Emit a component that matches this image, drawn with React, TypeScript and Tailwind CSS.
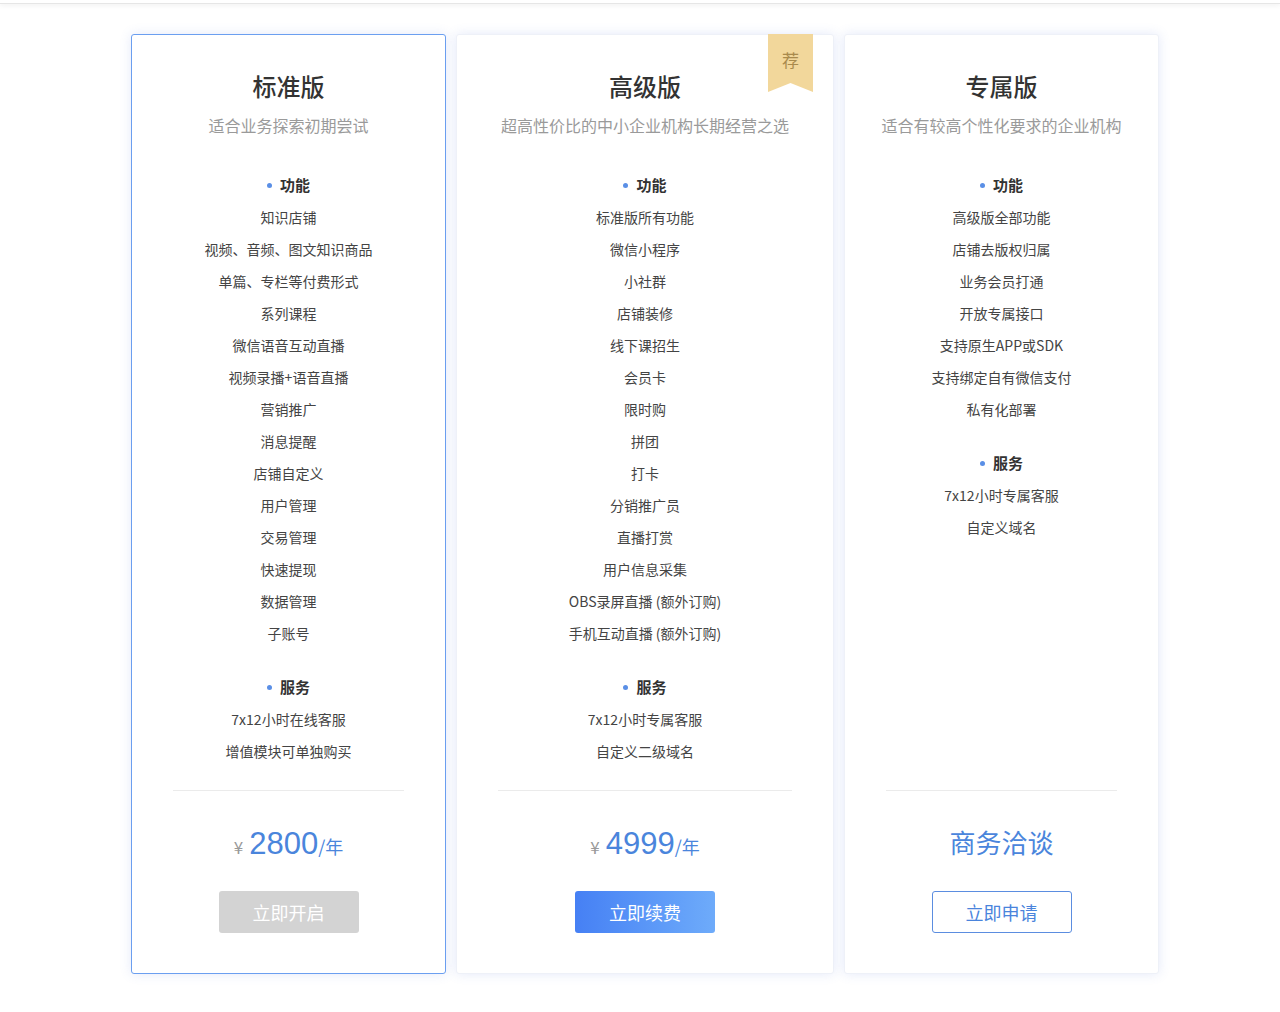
import React from 'react';

interface Group {
  title: string;
  items: string[];
}

interface Plan {
  name: string;
  desc: string;
  groups: Group[];
  recommended?: boolean;
  selected?: boolean;
  wide?: boolean;
  price?: string;
  action: string;
  variant: 'gray' | 'blue' | 'outline';
}

const plans: Plan[] = [
  {
    name: '标准版',
    desc: '适合业务探索初期尝试',
    selected: true,
    groups: [
      {
        title: '功能',
        items: [
          '知识店铺',
          '视频、音频、图文知识商品',
          '单篇、专栏等付费形式',
          '系列课程',
          '微信语音互动直播',
          '视频录播+语音直播',
          '营销推广',
          '消息提醒',
          '店铺自定义',
          '用户管理',
          '交易管理',
          '快速提现',
          '数据管理',
          '子账号',
        ],
      },
      { title: '服务', items: ['7x12小时在线客服', '增值模块可单独购买'] },
    ],
    price: '2800',
    action: '立即开启',
    variant: 'gray',
  },
  {
    name: '高级版',
    desc: '超高性价比的中小企业机构长期经营之选',
    recommended: true,
    wide: true,
    groups: [
      {
        title: '功能',
        items: [
          '标准版所有功能',
          '微信小程序',
          '小社群',
          '店铺装修',
          '线下课招生',
          '会员卡',
          '限时购',
          '拼团',
          '打卡',
          '分销推广员',
          '直播打赏',
          '用户信息采集',
          'OBS录屏直播 (额外订购)',
          '手机互动直播 (额外订购)',
        ],
      },
      { title: '服务', items: ['7x12小时专属客服', '自定义二级域名'] },
    ],
    price: '4999',
    action: '立即续费',
    variant: 'blue',
  },
  {
    name: '专属版',
    desc: '适合有较高个性化要求的企业机构',
    groups: [
      {
        title: '功能',
        items: [
          '高级版全部功能',
          '店铺去版权归属',
          '业务会员打通',
          '开放专属接口',
          '支持原生APP或SDK',
          '支持绑定自有微信支付',
          '私有化部署',
        ],
      },
      { title: '服务', items: ['7x12小时专属客服', '自定义域名'] },
    ],
    action: '立即申请',
    variant: 'outline',
  },
];

const PlanCard: React.FC<{ plan: Plan }> = ({ plan }) => {
  const btn =
    plan.variant === 'gray'
      ? 'bg-[#d3d3d3] text-white'
      : plan.variant === 'blue'
      ? 'bg-gradient-to-r from-[#4680f4] to-[#6eabfa] text-white'
      : 'border border-[#5b8de0] text-[#4a84dc] bg-white';

  return (
    <div
      className={`relative flex flex-col bg-white rounded-[3px] h-[940px] shadow-[0_0_12px_rgba(90,120,220,0.16)] ${
        plan.wide ? 'w-[378px]' : 'w-[315px]'
      } ${plan.selected ? 'border border-[#6b9ff0]' : 'border border-[#eef1f8]'}`}
    >
      {plan.recommended && (
        <div className="absolute top-[-1px] right-[20px] w-[45px] h-[58px]">
          <svg width="45" height="58" viewBox="0 0 45 58" className="absolute inset-0">
            <polygon points="0,0 45,0 45,58 22.5,49 0,58" fill="#f2d79b" />
          </svg>
          <div className="relative text-center text-[17px] leading-none pt-[17px] text-[#a98a4c]">荐</div>
        </div>
      )}

      <div className="flex-1 flex flex-col items-center pt-[34px]">
        <div className="text-[24px] leading-[34px] font-medium text-[#333]">{plan.name}</div>
        <div className="mt-[10px] text-[16px] leading-[24px] text-[#9a9a9a]">{plan.desc}</div>
        <div className="mt-[32px] flex flex-col items-center gap-[22px]">
          {plan.groups.map((g) => (
            <div key={g.title} className="flex flex-col items-center">
              <div className="flex items-center h-[32px] text-[15px] font-semibold text-[#333]">
                <span className="w-[5px] h-[5px] rounded-full bg-[#5a8fe6] mr-[8px]" />
                {g.title}
              </div>
              {g.items.map((it) => (
                <div key={it} className="h-[32px] leading-[32px] text-[14px] text-[#444]">
                  {it}
                </div>
              ))}
            </div>
          ))}
        </div>
      </div>

      <div className="mx-[41px] border-t border-[#ebebeb]" />
      <div className="h-[182px] flex flex-col items-center">
        {plan.price ? (
          <div className="h-[100px] flex items-center justify-center pt-[6px]">
            <div className="flex items-baseline text-[#4a85dc]">
              <span className="text-[17px] text-[#999] mr-[6px]">¥</span>
              <span className="text-[31px] leading-none font-['Helvetica','Liberation_Sans',sans-serif]">{plan.price}</span>
              <span className="text-[18px]">/年</span>
            </div>
          </div>
        ) : (
          <div className="h-[100px] flex items-center justify-center">
            <div className="text-[26px] text-[#4a85dc]">商务洽谈</div>
          </div>
        )}
        <button className={`w-[140px] h-[42px] rounded-[3px] text-[18px] ${btn}`}>{plan.action}</button>
      </div>
    </div>
  );
};

export default function App() {
  return (
    <div className="min-h-[1012px] bg-white font-['Noto_Sans_CJK_SC','Noto_Sans',sans-serif]">
      <div className="h-[4px] border-b border-[#e6e6e6] shadow-[0_2px_4px_rgba(0,0,0,0.05)]" />
      <div className="flex justify-center gap-[10px] pt-[30px] pl-[10px]">
        {plans.map((p) => (
          <PlanCard key={p.name} plan={p} />
        ))}
      </div>
    </div>
  );
}
